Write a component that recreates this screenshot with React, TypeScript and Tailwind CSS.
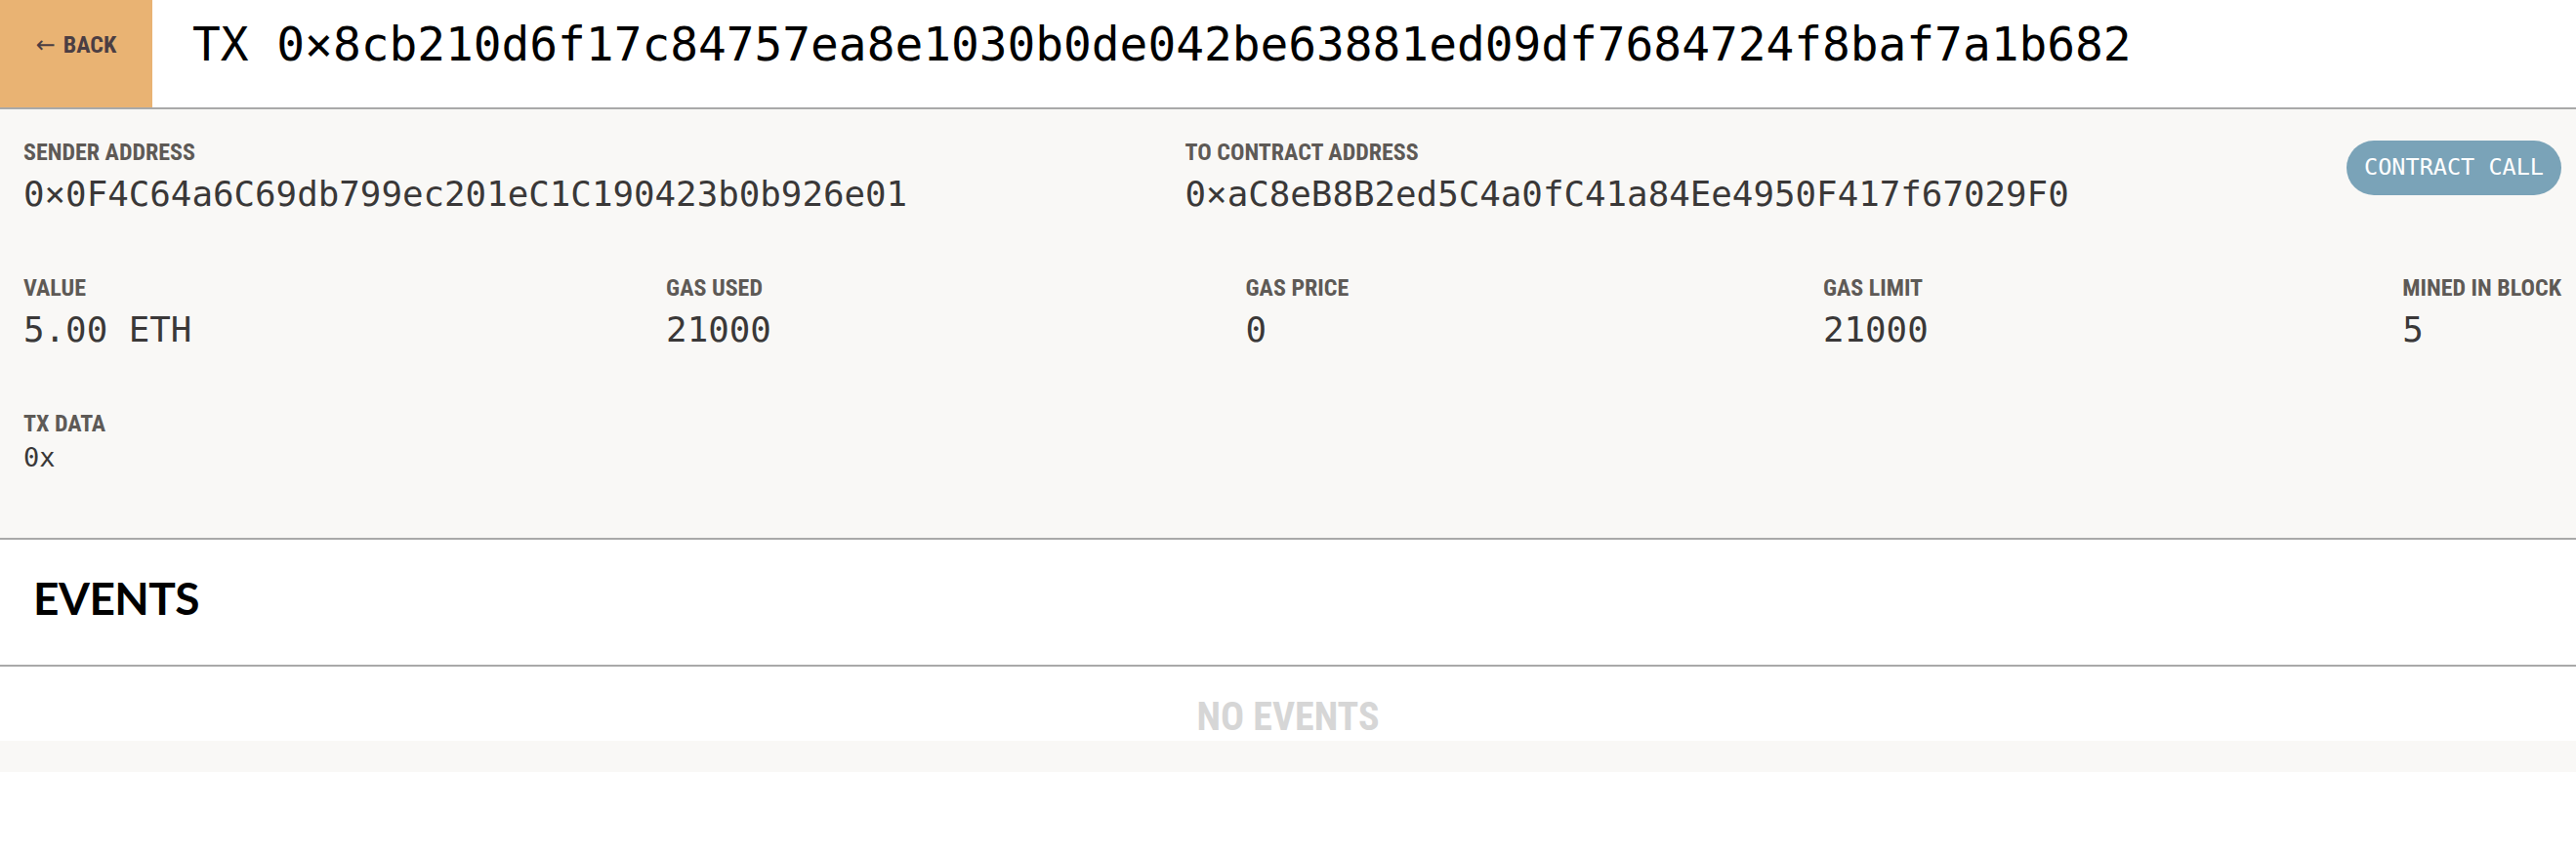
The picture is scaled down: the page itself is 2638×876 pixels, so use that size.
import React from "react";

const cond = "font-['Roboto_Condensed','Liberation_Sans_Narrow','Arial_Narrow',Roboto,sans-serif]";
const mono = "font-['DejaVu_Sans_Mono','Liberation_Mono',monospace]";

function Label({ children }: { children: React.ReactNode }) {
  return (
    <div className={`${cond} text-[24px] leading-[28px] font-bold text-[#5e5a56] uppercase whitespace-nowrap`}>
      {children}
    </div>
  );
}

function Value({ children, small }: { children: React.ReactNode; small?: boolean }) {
  return (
    <div
      className={`${mono} text-[#3a3838] whitespace-nowrap ${
        small ? "text-[27px] leading-[32px] mt-[5px]" : "text-[35.8px] leading-[44px] mt-[7px]"
      }`}
    >
      {children}
    </div>
  );
}

function Field({ label, value, small }: { label: string; value: string; small?: boolean }) {
  return (
    <div className="flex flex-col">
      <Label>{label}</Label>
      <Value small={small}>{value}</Value>
    </div>
  );
}

export default function App() {
  return (
    <div className="w-[2638px] h-[876px] bg-white flex flex-col overflow-hidden">
      {/* Header */}
      <div className="h-[112px] flex border-b-2 border-[#a9a9a9] bg-white shrink-0">
        <div className="w-[156px] h-full bg-[#e9b373] flex items-center justify-center pb-[19px]">
          <div className={`${cond} h-[28px] text-[24px] leading-[28px] font-bold text-[#4b3e43] flex items-center gap-[8px] whitespace-nowrap`}>
            <span className="font-['DejaVu_Sans',sans-serif] font-normal text-[24px] leading-[28px] h-[28px]">←</span>
            <span className="h-[28px]">BACK</span>
          </div>
        </div>
        <div className={`${mono} pl-[41px] pt-[18px] text-[47.8px] leading-[56px] text-black whitespace-nowrap`}>
          TX 0×8cb210d6f17c84757ea8e1030b0de042be63881ed09df7684724f8baf7a1b682
        </div>
      </div>

      {/* Details */}
      <div className="bg-[#f9f8f6] border-b-2 border-[#a9a9a9] pl-[24px] pr-[15px] pt-[30px] pb-[66px] flex flex-col gap-[60px] shrink-0">
        <div className="flex justify-between items-start">
          <Field label="Sender Address" value="0×0F4C64a6C69db799ec201eC1C190423b0b926e01" />
          <Field label="To Contract Address" value="0×aC8eB8B2ed5C4a0fC41a84Ee4950F417f67029F0" />
          <div
            className={`${mono} mt-[2px] h-[56px] px-[18px] rounded-full bg-[#7aa3b8] text-white text-[23.5px] flex items-center whitespace-nowrap`}
          >
            CONTRACT CALL
          </div>
        </div>
        <div className="flex justify-between items-start">
          <Field label="Value" value="5.00 ETH" />
          <Field label="Gas Used" value="21000" />
          <Field label="Gas Price" value="0" />
          <Field label="Gas Limit" value="21000" />
          <Field label="Mined in Block" value="5" />
        </div>
        <div className="flex">
          <Field label="TX Data" value="0x" small />
        </div>
      </div>

      {/* Events header */}
      <div className="h-[130px] border-b-2 border-[#a9a9a9] bg-white flex items-center pl-[34px] pb-[8px] shrink-0">
        <h2 className="font-['Lato','Open_Sans',sans-serif] font-bold text-[46px] leading-[56px] tracking-[-0.5px] text-black">
          EVENTS
        </h2>
      </div>

      {/* No events */}
      <div className="h-[76px] flex justify-center items-end shrink-0">
        <div className={`${cond} text-[40px] leading-[44px] font-bold text-[#d6d6d6] mb-[2px]`}>NO EVENTS</div>
      </div>
      <div className="h-[32px] bg-[#f9f8f6] shrink-0" />
      <div className="flex-1 bg-white" />
    </div>
  );
}
